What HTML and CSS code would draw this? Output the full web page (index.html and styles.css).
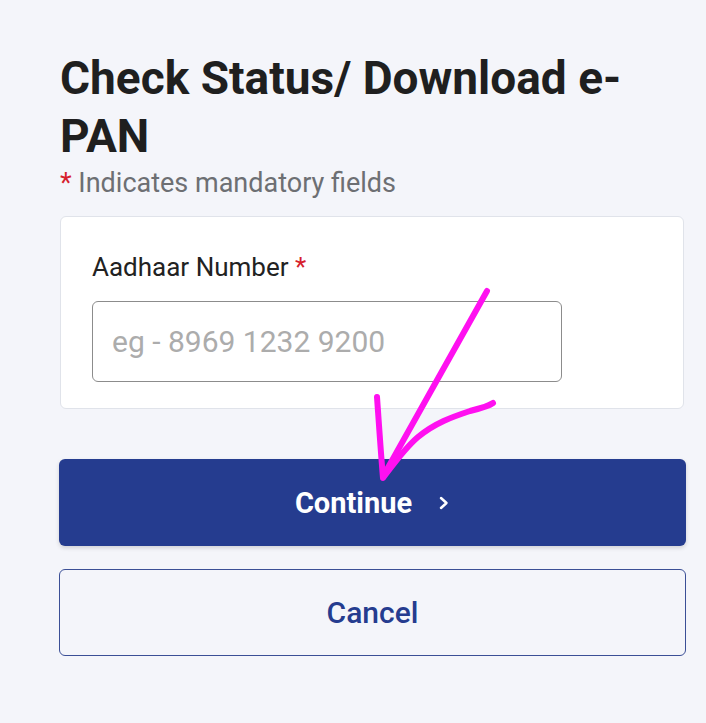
FILE: index.html
```html
<!DOCTYPE html>
<html lang="en">
  <head>
    <meta charset="UTF-8" />
    <meta name="viewport" content="width=device-width, initial-scale=1.0" />
    <title>Check Status / Download e-PAN</title>
    <link rel="stylesheet" href="styles.css">
  </head>
  <body>
    <div class="page">
      <h1>Check Status/ Download e-PAN</h1>
      <p class="note"><span class="req">*</span> Indicates mandatory fields</p>

      <div class="card">
        <label class="label" for="aadhaar">Aadhaar Number <span class="req">*</span></label>
        <input type="text" id="aadhaar" class="field" placeholder="eg - 8969 1232 9200" />
      </div>

      <div class="actions">
        <button class="btn btn-primary">
          Continue
          <svg class="chev" width="12" height="14" viewBox="0 0 12 14">
            <path d="M3 2 L8.5 7 L3 12" />
          </svg>
        </button>
        <button class="btn btn-outline">Cancel</button>
      </div>
    </div>

    <!-- hand drawn arrow on the screenshot -->
    <svg class="scribble" width="706" height="723" viewBox="0 0 706 723">
      <path d="M487 291 L385 473" />
      <path d="M377 397 C379 425 381 455 383 478 C395 462 405 448 418 437 C435 423 452 417 470 411 C482 408 489 406 493 403" />
    </svg>
  </body>
</html>
```

FILE: styles.css
```css
/* e-PAN status page */
body {
  font-family: Roboto, "Noto Sans", Arial, sans-serif;
  margin: 0;
  background-color: #f4f5fa;
  color: #222;
}
.page {
  padding: 49px 20px 40px 60px;
}
h1 {
  font-size: 46px;
  font-weight: 700;
  line-height: 58px;
  margin: 0;
  width: 610px;
  color: #1f1f1f;
}
.note {
  margin: 2px 0 0;
  font-size: 27px;
  line-height: 32px;
  color: #6d6f73;
}
.req {
  color: #d6202c;
}
.card {
  margin-top: 17px;
  width: 624px;
  box-sizing: border-box;
  background-color: #fff;
  border: 1px solid #e0e3ea;
  border-radius: 6px;
  padding: 34px 31px 26px;
}
.label {
  display: block;
  font-size: 26px;
  line-height: 32px;
  color: #222;
  margin-bottom: 18px;
}
.field {
  display: block;
  width: 470px;
  height: 81px;
  box-sizing: border-box;
  border: 1px solid #8c8c8c;
  border-radius: 6px;
  padding: 0 19px;
  font-family: inherit;
  font-size: 30px;
}
.field::placeholder {
  color: #acacac;
}
.actions {
  margin-top: 50px;
  display: flex;
  flex-direction: column;
  gap: 23px;
  width: 627px;
  margin-left: -1px;
}
.btn {
  height: 87px;
  border-radius: 6px;
  font-family: inherit;
  font-size: 29px;
  cursor: pointer;
  display: flex;
  align-items: center;
  justify-content: center;
}
.btn-primary {
  background-color: #253c8f;
  color: #fff;
  border: none;
  font-weight: 700;
  box-shadow: 0 2px 4px rgba(0, 0, 0, 0.15);
  padding-left: 12px;
  padding-right: 12px;
}
.chev {
  margin-left: 26px;
}
.chev path {
  fill: none;
  stroke: #fff;
  stroke-width: 2.5;
  stroke-linecap: round;
  stroke-linejoin: round;
}
.btn-outline {
  background-color: transparent;
  color: #253c8f;
  border: 1.5px solid #3b4f96;
  font-weight: 500;
  font-size: 30px;
}
.scribble {
  position: absolute;
  left: 0;
  top: 0;
  pointer-events: none;
}
.scribble path {
  fill: none;
  stroke: #ff10f0;
  stroke-width: 6;
  stroke-linecap: round;
  stroke-linejoin: round;
}
```
